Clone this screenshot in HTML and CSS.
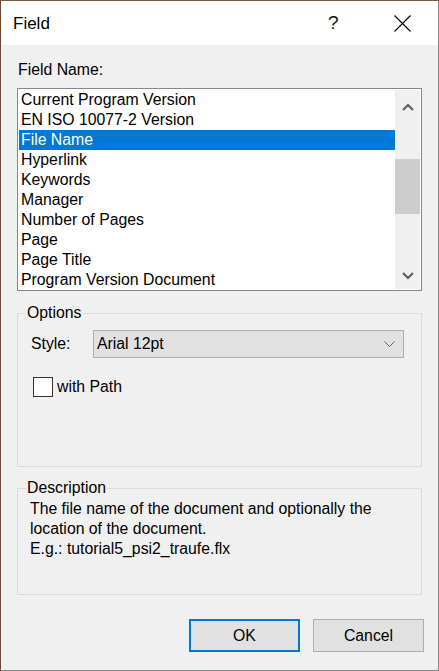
FILE: index.html
```
<!DOCTYPE html>
<html>
<head>
<meta charset="utf-8">
<link rel="stylesheet" href="styles.css">
</head>
<body>
<div class="window">
  <div class="titlebar">
    <span class="title">Field</span>
    <span class="help">?</span>
    <span class="close">
      <svg width="17" height="17" viewBox="0 0 17 17"><path d="M0.5 0.5 L16.5 16.5 M16.5 0.5 L0.5 16.5" stroke="#000" stroke-width="1.1" fill="none"/></svg>
    </span>
  </div>
  <div class="content">
    <div class="label">Field Name:</div>
    <div class="listbox">
      <ul class="items">
        <li>Current Program Version</li>
        <li>EN ISO 10077-2 Version</li>
        <li class="selected">File Name</li>
        <li>Hyperlink</li>
        <li>Keywords</li>
        <li>Manager</li>
        <li>Number of Pages</li>
        <li>Page</li>
        <li>Page Title</li>
        <li>Program Version Document</li>
      </ul>
      <div class="scrollbar">
        <div class="sb-up">
          <svg width="12" height="8" viewBox="0 0 12 8"><polyline points="1,7 6,2 11,7" fill="none" stroke="#606060" stroke-width="2.2"/></svg>
        </div>
        <div class="sb-track"><div class="sb-thumb"></div></div>
        <div class="sb-down">
          <svg width="12" height="8" viewBox="0 0 12 8"><polyline points="1,1 6,6 11,1" fill="none" stroke="#606060" stroke-width="2.2"/></svg>
        </div>
      </div>
    </div>
    <fieldset class="group options">
      <legend>Options</legend>
      <div class="group-body">
        <div class="style-row">
          <span class="style-label">Style:</span>
          <div class="combo">
            <span>Arial 12pt</span>
            <svg width="11" height="7" viewBox="0 0 11 7"><polyline points="0.5,0.5 5.5,5.5 10.5,0.5" fill="none" stroke="#606060" stroke-width="1"/></svg>
          </div>
        </div>
        <label class="check"><span class="box"></span>with Path</label>
      </div>
    </fieldset>
    <fieldset class="group desc">
      <legend>Description</legend>
      <div class="group-body">
        <p class="desc-text">The file name of the document and optionally the<br>location of the document.<br>E.g.: tutorial5_psi2_traufe.flx</p>
      </div>
    </fieldset>
    <div class="buttons">
      <div class="btn default">OK</div>
      <div class="btn">Cancel</div>
    </div>
  </div>
</div>
</body>
</html>
```
FILE: styles.css
```
* { box-sizing: border-box; }
html, body { margin: 0; padding: 0; }
body {
  font-family: "Liberation Sans", Arial, sans-serif;
  font-size: 15.8px;
  line-height: 20px;
  color: #000;
  background: #fff;
}
.window {
  width: 439px;
  height: 671px;
  border: 1px solid #858585;
  border-left-color: #6e4a36;
  border-top-color: #7a5a40;
  background: #f0f0f0;
  display: flex;
  flex-direction: column;
}
.titlebar {
  height: 44px;
  background: #fff;
  display: flex;
  align-items: center;
  flex-shrink: 0;
}
.title {
  font-size: 17px;
  padding-left: 12px;
  flex: 1;
  margin-top: 1px;
}
.help {
  font-size: 19px;
  width: 20px;
  margin-right: 46px;
  color: #111;
}
.close {
  width: 17px;
  height: 17px;
  margin-right: 27px;
  display: flex;
}
.content {
  flex: 1;
  padding: 15px 16px 0 16px;
  display: flex;
  flex-direction: column;
}
.label {
  padding-left: 1px;
  height: 20px;
}
.listbox {
  margin-top: 8px;
  height: 203px;
  border: 1px solid #828790;
  background: #fff;
  padding: 1px;
  display: flex;
}
.items {
  list-style: none;
  margin: 0;
  padding: 0;
  flex: 1;
  overflow: hidden;
}
.items li {
  height: 20px;
  padding-left: 2px;
  white-space: nowrap;
}
.items li.selected {
  background: #0078d7;
  color: #fff;
}
.scrollbar {
  width: 25px;
  background: #f0f0f0;
  display: flex;
  flex-direction: column;
}
.sb-up {
  height: 25px;
  padding-top: 13px;
  display: flex;
  justify-content: center;
  align-items: flex-start;
}
.sb-track {
  flex: 1;
  padding-top: 44px;
}
.sb-thumb {
  height: 55px;
  background: #cdcdcd;
}
.sb-down {
  height: 25px;
  padding-top: 8px;
  display: flex;
  justify-content: center;
  align-items: flex-start;
}
.group {
  margin: 0;
  padding: 0;
  border: 1px solid #dcdcdc;
  min-width: 0;
}
.group legend {
  margin-left: 8px;
  padding: 0 1px;
  line-height: 20px;
}
.options {
  margin-top: 12px;
  height: 164px;
}
.options .group-body {
  padding: 7px 17px 0 13px;
}
.style-row {
  display: flex;
  align-items: center;
  height: 28px;
}
.style-label {
  width: 62px;
}
.combo {
  flex: 1;
  height: 28px;
  background: #e1e1e1;
  border: 1px solid #adadad;
  display: flex;
  align-items: center;
  justify-content: space-between;
  padding: 0 8px 0 3px;
}
.check {
  display: flex;
  align-items: center;
  margin-top: 19px;
  margin-left: 2px;
  height: 20px;
}
.box {
  width: 20px;
  height: 20px;
  border: 1px solid #333;
  background: #fff;
  margin-right: 4px;
}
.desc {
  margin-top: 11px;
  height: 117px;
}
.desc .group-body {
  padding: 1px 12px 0 12px;
}
.desc-text {
  margin: 0;
}
.buttons {
  display: flex;
  justify-content: flex-end;
  gap: 13px;
  margin-top: 24px;
  margin-right: -2px;
}
.btn {
  width: 111px;
  height: 33px;
  background: #e1e1e1;
  border: 1px solid #adadad;
  display: flex;
  align-items: center;
  justify-content: center;
}
.btn.default {
  border: 2px solid #0078d7;
}
```
